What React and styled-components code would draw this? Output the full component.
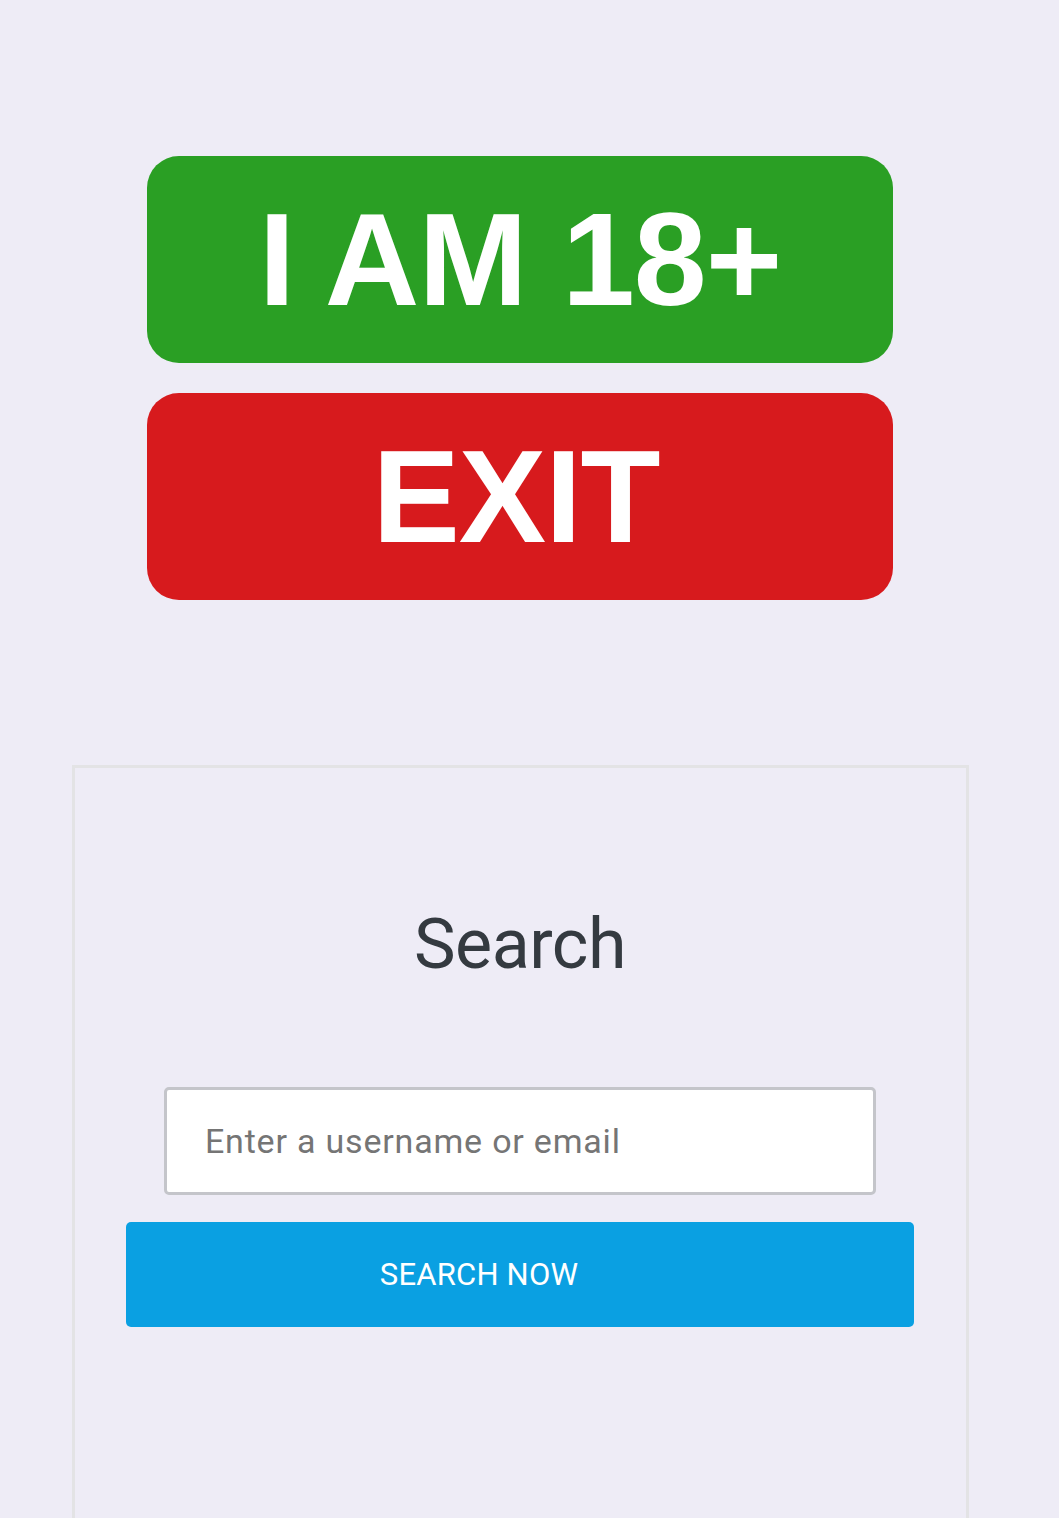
import React, { useState } from 'react';
import styled, { createGlobalStyle } from 'styled-components';

const GlobalStyle = createGlobalStyle`
  html, body {
    margin: 0;
    padding: 0;
    background: #eeecf6;
  }
  body {
    font-family: Roboto, "Liberation Sans", Arial, sans-serif;
    overflow: hidden;
  }
  * {
    box-sizing: border-box;
  }
`;

const Page = styled.div`
  width: 1040px;
  min-height: 1518px;
  padding-top: 156px;
  display: flex;
  flex-direction: column;
  align-items: center;
`;

const AgeGate = styled.div`
  width: 746px;
  display: flex;
  flex-direction: column;
  gap: 30px;
`;

const GateButton = styled.button`
  height: 207px;
  border: none;
  border-radius: 32px;
  background: ${(p) => p.$bg};
  color: #fff;
  font-family: "Liberation Sans", Arial, sans-serif;
  font-weight: 700;
  font-size: 131px;
  line-height: 1;
  letter-spacing: -1px;
  display: flex;
  align-items: center;
  justify-content: center;
  padding: 0 ${(p) => p.$shift || 0}px 0 0;
  cursor: pointer;
`;

const SearchCard = styled.section`
  margin-top: 165px;
  width: 897px;
  min-height: 800px;
  border: 3px solid #e3e3e5;
  padding-top: 133px;
  display: flex;
  flex-direction: column;
  align-items: center;
`;

const Heading = styled.h2`
  margin: 0;
  font-family: Roboto, sans-serif;
  font-weight: 400;
  font-size: 70px;
  line-height: 86px;
  letter-spacing: -0.5px;
  color: #343a40;
`;

const Form = styled.form`
  margin-top: 100px;
  display: flex;
  flex-direction: column;
  align-items: center;
`;

const Input = styled.input`
  width: 712px;
  height: 108px;
  border: 3px solid #c4c5ca;
  border-radius: 5px;
  background: #fff;
  padding: 0 38px;
  font-family: Roboto, sans-serif;
  font-size: 34px;
  letter-spacing: 0.8px;
  color: #333;
  outline: none;

  &::placeholder {
    color: #757575;
  }
`;

const SubmitButton = styled.button`
  margin-top: 27px;
  width: 788px;
  height: 105px;
  border: none;
  border-radius: 5px;
  background: #0aa0e2;
  color: #fff;
  font-family: Roboto, sans-serif;
  font-size: 31px;
  letter-spacing: 0.2px;
  text-transform: uppercase;
  padding: 0 82px 0 0;
  cursor: pointer;
`;

function App() {
  const [query, setQuery] = useState('');

  const handleSubmit = (e) => {
    e.preventDefault();
  };

  return (
    <>
      <GlobalStyle />
      <Page>
        <AgeGate>
          <GateButton $bg="#2a9f24">I AM 18+</GateButton>
          <GateButton $bg="#d71a1d" $shift={8}>EXIT</GateButton>
        </AgeGate>

        <SearchCard>
          <Heading>Search</Heading>
          <Form onSubmit={handleSubmit}>
            <Input
              type="text"
              placeholder="Enter a username or email"
              value={query}
              onChange={(e) => setQuery(e.target.value)}
            />
            <SubmitButton type="submit">Search now</SubmitButton>
          </Form>
        </SearchCard>
      </Page>
    </>
  );
}

export default App;
